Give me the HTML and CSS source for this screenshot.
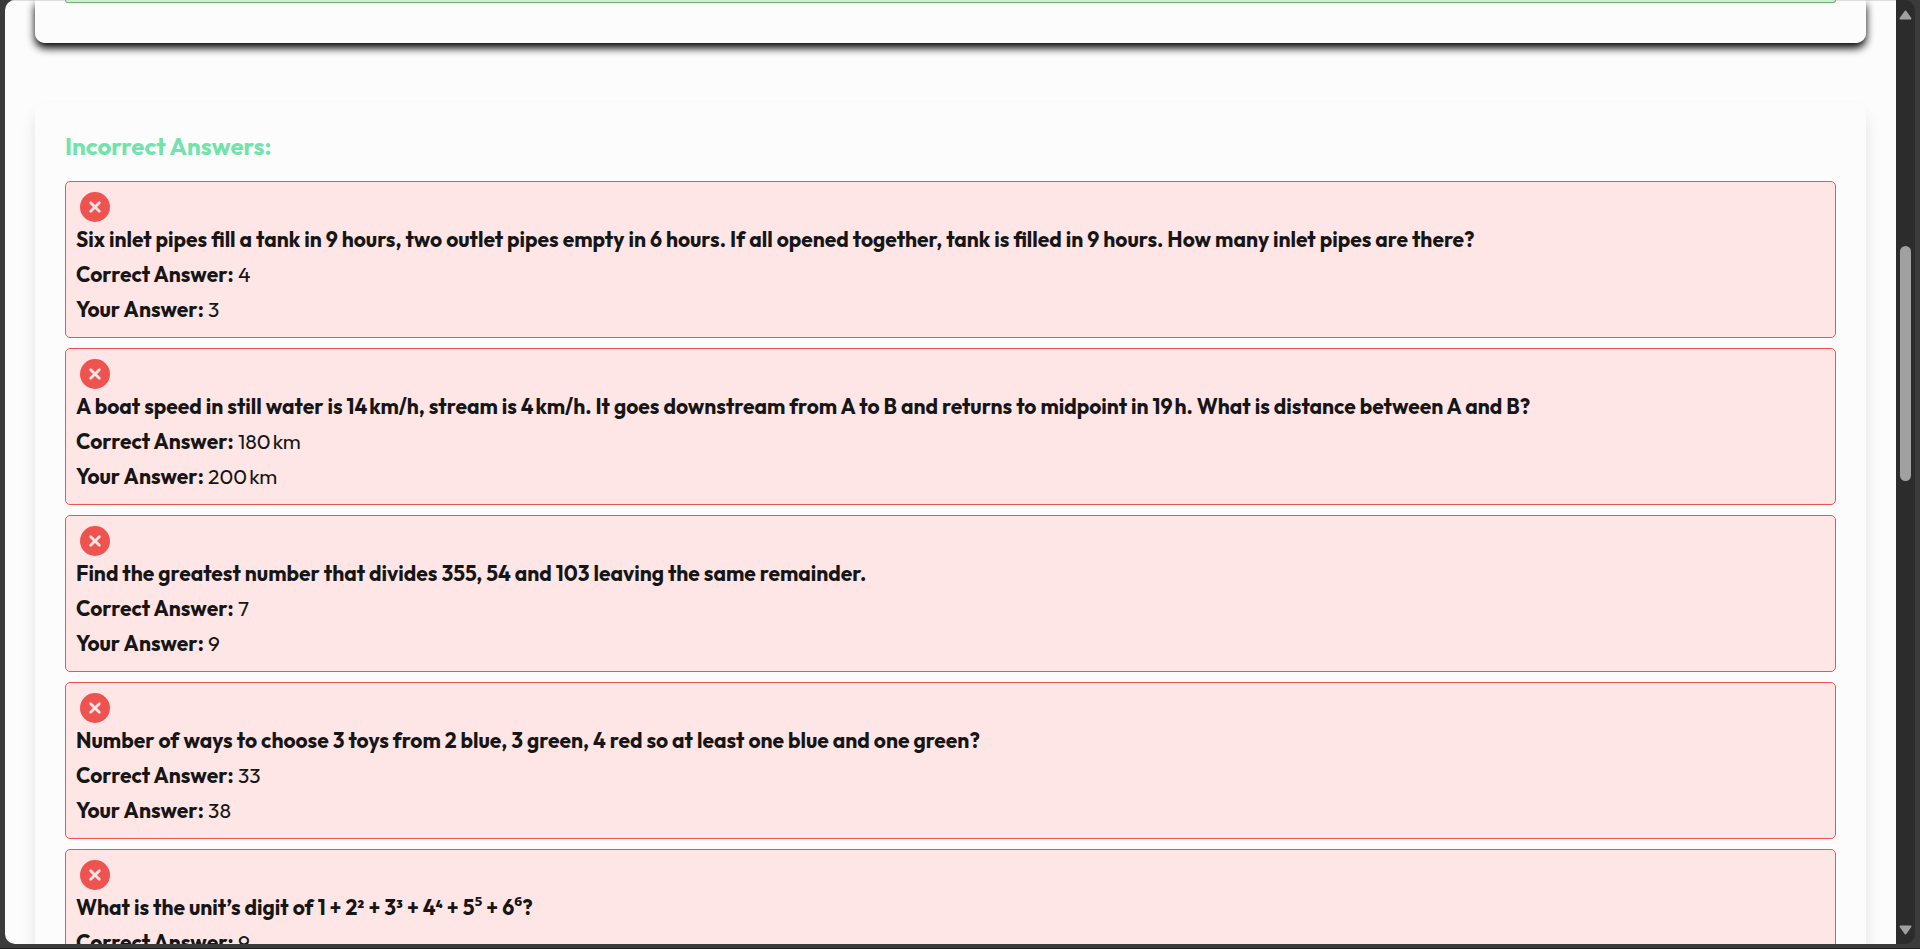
FILE: index.html
```
<!DOCTYPE html>
<html lang="en">
<head>
<meta charset="utf-8">
<title>Quiz Results</title>
<link rel="stylesheet" href="styles.css">
</head>
<body>
<svg class="defs" aria-hidden="true">
  <symbol id="cross" viewBox="0 0 30 30">
    <circle cx="15" cy="15" r="15" fill="#ef5350"/>
    <path d="M10.7 10.7l8.6 8.6M19.3 10.7l-8.6 8.6" stroke="#ffe6e6" stroke-width="2.8" stroke-linecap="round"/>
  </symbol>
</svg>
<div class="window">
  <main class="page">
    <section class="card card-correct" aria-label="Correct Answers">
      <ul class="list">
        <li class="tail"></li>
      </ul>
    </section>
    <section class="card card-incorrect">
      <h2 class="title">Incorrect Answers:</h2>
      <ul class="list">
        <li class="item">
          <svg class="icon" aria-hidden="true"><use href="#cross"/></svg>
          <p class="line"><strong>Six inlet pipes fill a tank in 9 hours, two outlet pipes empty in 6 hours. If all opened together, tank is filled in 9 hours. How many inlet pipes are there?</strong></p>
          <p class="line"><strong>Correct Answer:</strong> 4</p>
          <p class="line"><strong>Your Answer:</strong> 3</p>
        </li>
        <li class="item">
          <svg class="icon" aria-hidden="true"><use href="#cross"/></svg>
          <p class="line"><strong>A boat speed in still water is 14&#8239;km/h, stream is 4&#8239;km/h. It goes downstream from A to B and returns to midpoint in 19&#8239;h. What is distance between A and B?</strong></p>
          <p class="line"><strong>Correct Answer:</strong> 180&#8239;km</p>
          <p class="line"><strong>Your Answer:</strong> 200&#8239;km</p>
        </li>
        <li class="item">
          <svg class="icon" aria-hidden="true"><use href="#cross"/></svg>
          <p class="line"><strong>Find the greatest number that divides 355, 54 and 103 leaving the same remainder.</strong></p>
          <p class="line"><strong>Correct Answer:</strong> 7</p>
          <p class="line"><strong>Your Answer:</strong> 9</p>
        </li>
        <li class="item">
          <svg class="icon" aria-hidden="true"><use href="#cross"/></svg>
          <p class="line"><strong>Number of ways to choose 3 toys from 2 blue, 3 green, 4 red so at least one blue and one green?</strong></p>
          <p class="line"><strong>Correct Answer:</strong> 33</p>
          <p class="line"><strong>Your Answer:</strong> 38</p>
        </li>
        <li class="item">
          <svg class="icon" aria-hidden="true"><use href="#cross"/></svg>
          <p class="line"><strong>What is the unit’s digit of 1 + 2² + 3³ + 4⁴ + 5⁵ + 6⁶?</strong></p>
          <p class="line"><strong>Correct Answer:</strong> 9</p>
        </li>
      </ul>
    </section>
  </main>
  <div class="scrollbar" aria-hidden="true">
    <svg class="arrow" viewBox="0 0 13 10"><path d="M6.5 1.5L11.5 8.5H1.5z"/></svg>
    <div class="track">
      <div class="thumb"></div>
    </div>
    <svg class="arrow" viewBox="0 0 13 10"><path d="M1.5 1.5H11.5L6.5 8.5z"/></svg>
  </div>
</div>
</body>
</html>
```

FILE: styles.css
```
* {
  box-sizing: border-box;
}

body {
  margin: 0;
  height: 100vh;
  padding: 0 5px 4px;
  overflow: hidden;
  background: #3b3b3b;
  border-bottom: 1px solid #202020;
  color: #161616;
  font: 400 21px/34px Outfit, "Noto Sans", sans-serif;
}

.defs {
  display: none;
}

.window {
  display: flex;
  height: 100%;
  overflow: hidden;
  border-radius: 10px;
  background: #2c2c2c;
}

.page {
  flex: 1;
  min-width: 0;
  overflow: hidden;
  padding: 0 30px;
  background: #fcfcfc;
  box-shadow: inset 0 1px #dedede;
}

.card {
  padding: 30px;
  border-radius: 10px;
  background: #fcfcfc;
}

.card-correct {
  margin-bottom: 60px;
  padding-top: 0;
  border-radius: 0 0 10px 10px;
  background: linear-gradient(#dedede 1px, #fcfcfc 1px);
  box-shadow: 0 5px 8px #000;
}

.card-incorrect {
  box-shadow: 0 10px 15px rgba(0, 0, 0, 0.1);
}

.title {
  margin: 0 0 22px;
  color: #72e3ad;
  font-size: 24px;
  font-weight: 700;
  line-height: 26px;
}

.list {
  margin: 0;
  padding: 0;
  list-style: none;
}

.tail {
  height: 3px;
  margin-bottom: 10px;
  border: 1px solid #66bb6a;
  border-top: 0;
  border-radius: 0 0 5px 5px;
  background: #d3ead4;
}

.item {
  margin-bottom: 10px;
  padding: 10px;
  border: 1px solid #ef5350;
  border-radius: 5px;
  background: #ffe6e6;
}

.icon {
  display: block;
  width: 30px;
  height: 30px;
  margin-left: 4px;
}

.line {
  margin: 0 0 1px;
}

.line strong {
  font-weight: 700;
}

.scrollbar {
  display: flex;
  flex-direction: column;
  align-items: center;
  width: 19px;
  padding: 10px 0 9px;
}

.arrow {
  width: 13px;
  height: 10px;
  fill: #a0a0a0;
  stroke: #a0a0a0;
  stroke-width: 2;
  stroke-linejoin: round;
}

.track {
  display: grid;
  flex: 1;
  grid-template-rows: 226fr 235fr 444fr;
}

.thumb {
  grid-row: 2;
  width: 11px;
  border-radius: 6px;
  background: #a0a0a0;
}
```
